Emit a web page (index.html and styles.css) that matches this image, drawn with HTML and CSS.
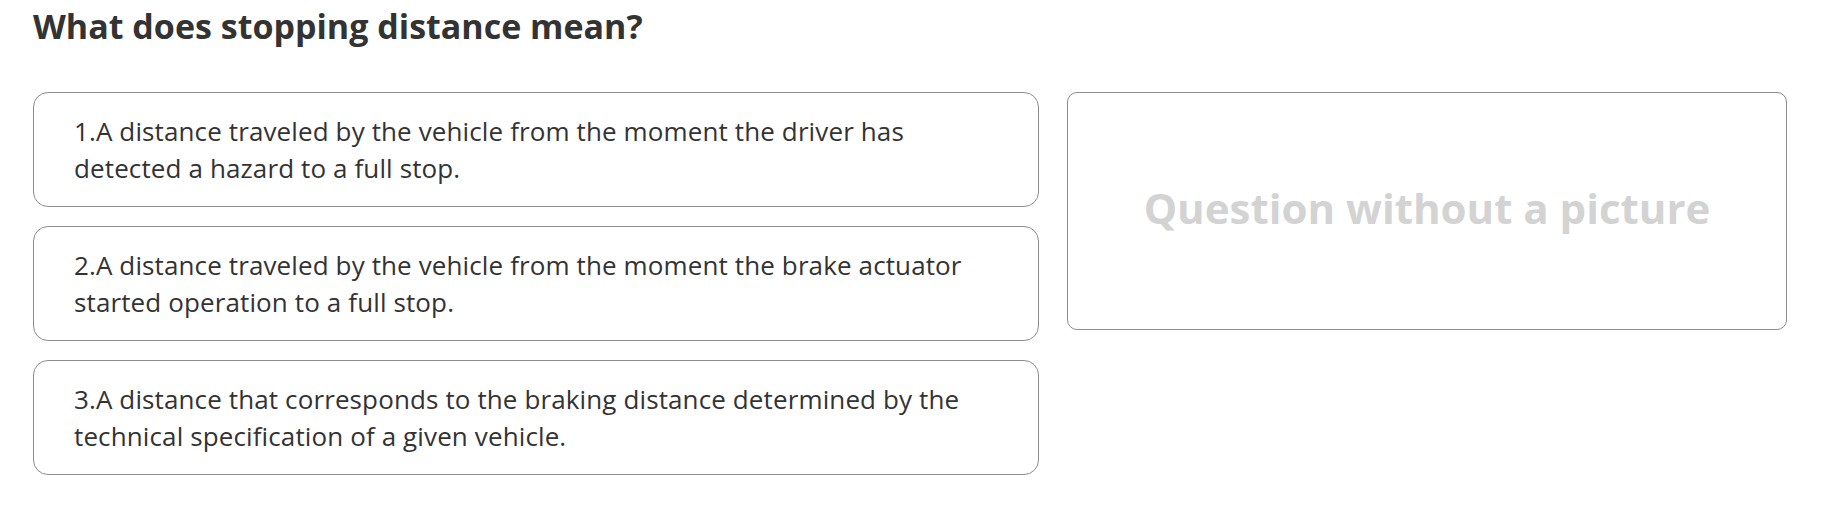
FILE: index.html
```html
<!DOCTYPE html>
<html lang="en">
<head>
<meta charset="utf-8">
<title>Question</title>
<link rel="stylesheet" href="styles.css">
</head>
<body>
<main class="question">
  <h1 class="question-title">What does stopping distance mean?</h1>
  <div class="question-body">
    <ol class="answers">
      <li class="answer">1.A distance traveled by the vehicle from the moment the driver has detected a hazard to a full stop.</li>
      <li class="answer">2.A distance traveled by the vehicle from the moment the brake actuator started operation to a full stop.</li>
      <li class="answer">3.A distance that corresponds to the braking distance determined by the technical specification of a given vehicle.</li>
    </ol>
    <div class="picture">
      <span class="picture-empty">Question without a picture</span>
    </div>
  </div>
</main>
</body>
</html>
```
FILE: styles.css
```css
html, body {
  margin: 0;
  padding: 0;
  background: #ffffff;
}

body {
  font-family: "Open Sans", "Noto Sans", "Liberation Sans", sans-serif;
  color: #333333;
}

.question {
  padding: 6px 33px 0 33px;
}

.question-title {
  margin: 0 0 46px 0;
  font-size: 34px;
  line-height: 40px;
  font-weight: 700;
  color: #333333;
}

.question-body {
  display: grid;
  grid-template-columns: 1006px 720px;
  column-gap: 28px;
  align-items: start;
}

.answers {
  list-style: none;
  margin: 0;
  padding: 0;
  display: flex;
  flex-direction: column;
  gap: 19px;
}

.answer {
  border: 1px solid #8c8c8c;
  border-radius: 15px;
  padding: 19.5px 40px 19.5px 40px;
  font-size: 26px;
  line-height: 37px;
  letter-spacing: 0.12px;
  color: #333333;
}

.picture {
  box-sizing: border-box;
  height: 238px;
  border: 1px solid #8c8c8c;
  border-radius: 10px;
  display: flex;
  align-items: center;
  justify-content: center;
  padding-bottom: 6px;
}

.picture-empty {
  font-size: 42px;
  line-height: 48px;
  font-weight: 700;
  color: #d3d3d3;
}
```
